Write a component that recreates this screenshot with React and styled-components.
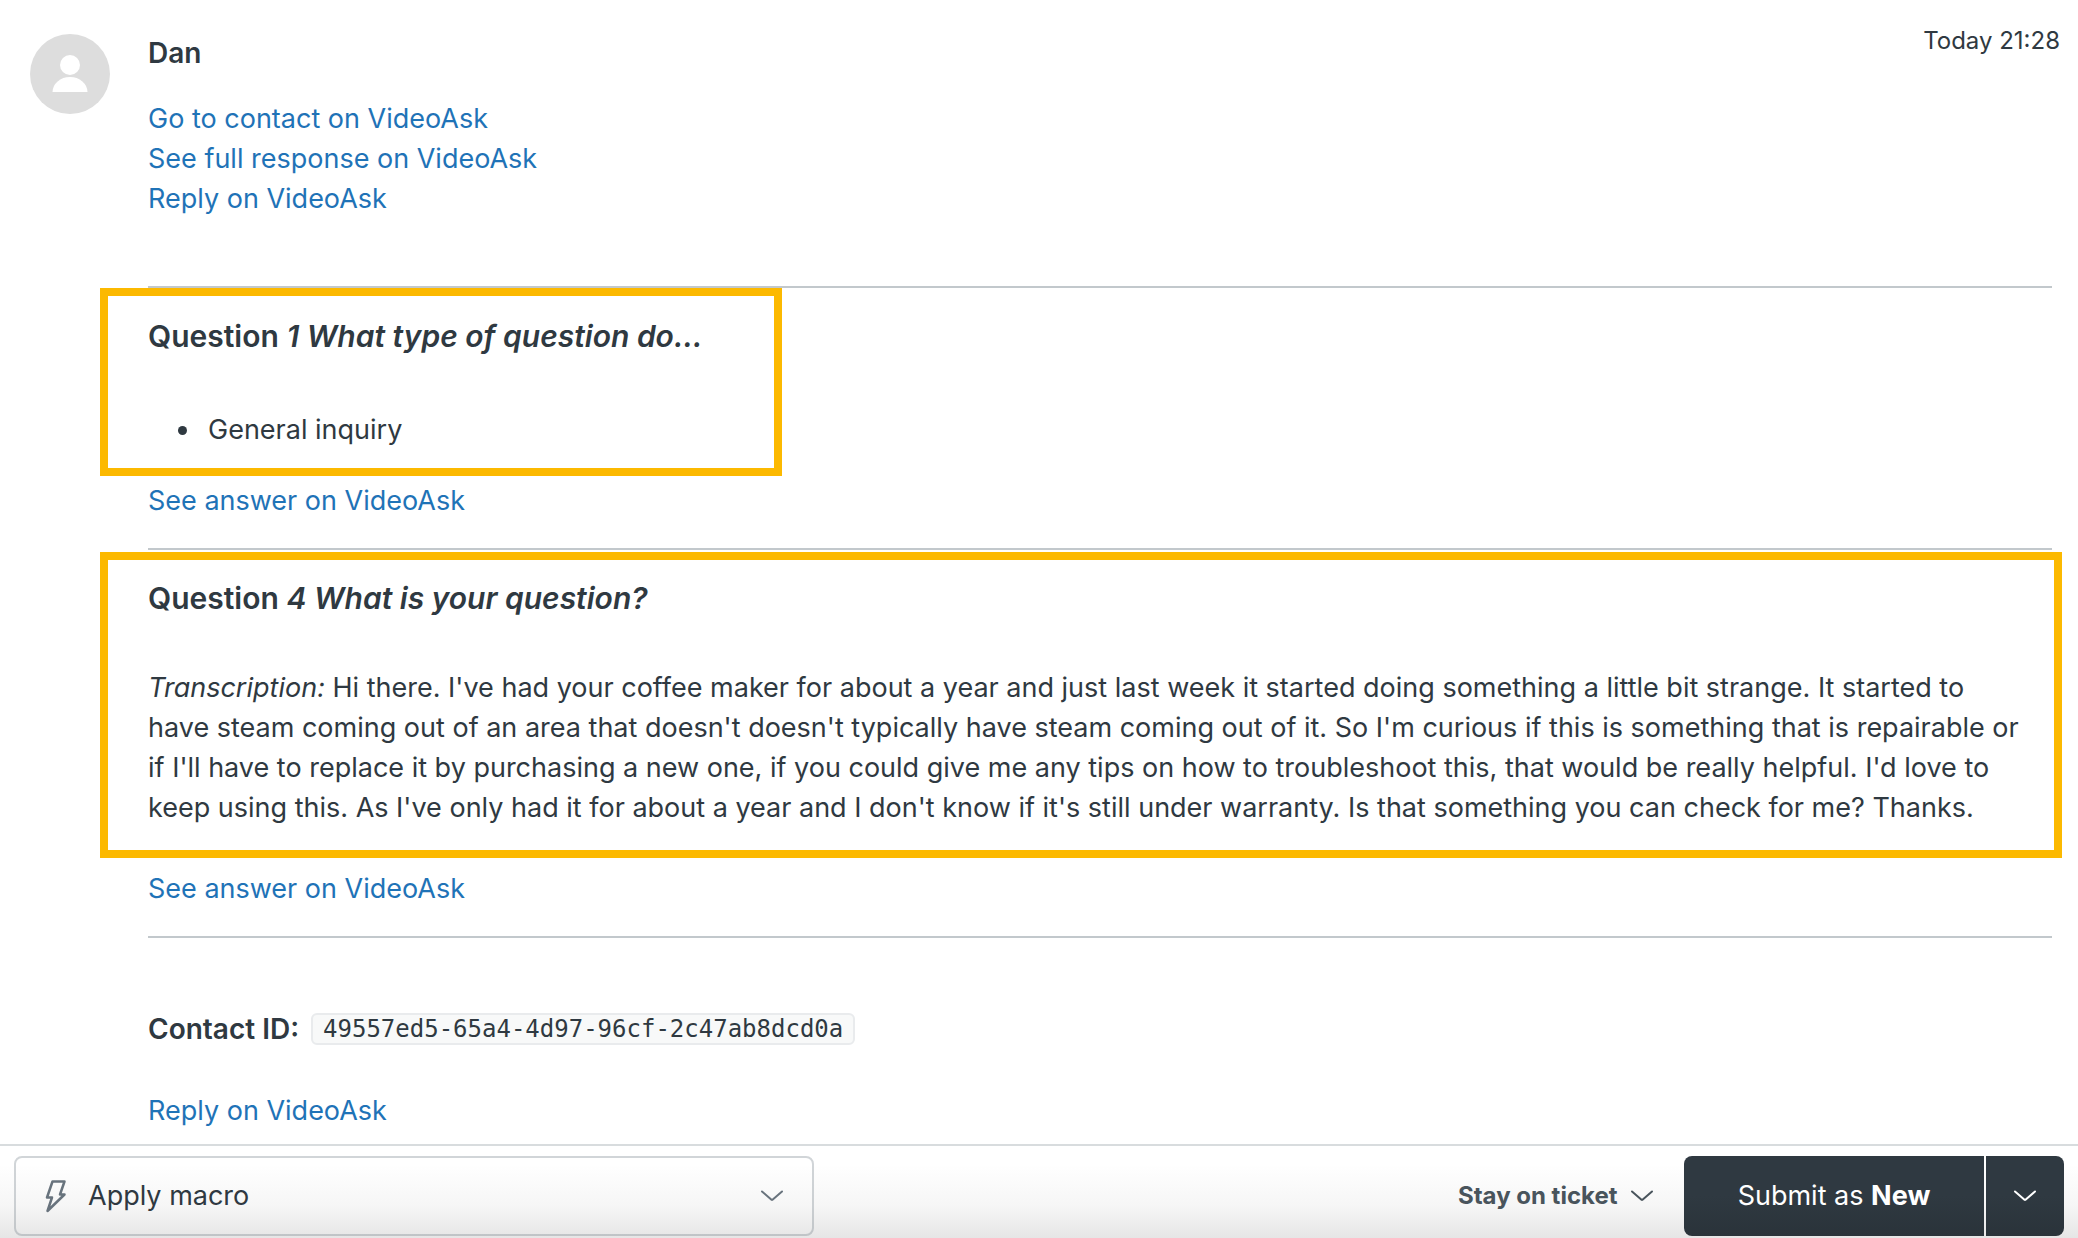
import styled, { createGlobalStyle } from "styled-components";

const GlobalStyle = createGlobalStyle`
  * {
    box-sizing: border-box;
  }
  body {
    margin: 0;
    background: #fff;
    color: #2f3941;
    font-family: Inter, "Liberation Sans", sans-serif;
    font-size: 27px;
    line-height: 40px;
  }
`;

const Page = styled.div`
  display: flex;
  flex-direction: column;
  min-height: 100vh;
`;

const Message = styled.article`
  display: grid;
  grid-template-columns: 80px minmax(0, 1fr);
  column-gap: 38px;
  flex: 1;
  padding: 21px 26px 13px 30px;
`;

const Avatar = styled.svg`
  width: 80px;
  height: 80px;
  margin-top: 13px;
`;

const MessageHeader = styled.header`
  display: flex;
  justify-content: space-between;
  align-items: flex-start;
  margin: 0 -8px 26px 0;
`;

const Author = styled.h2`
  margin: 12px 0 0;
  font-size: 28px;
  font-weight: 600;
`;

const Timestamp = styled.time`
  font-size: 24px;
`;

const Links = styled.nav`
  display: flex;
  flex-direction: column;
  align-items: flex-start;
  margin-bottom: 67px;
`;

const TextLink = styled.a`
  color: #1f73b7;
  text-decoration: none;

  &:hover {
    text-decoration: underline;
  }
`;

const Divider = styled.hr`
  height: 2px;
  margin: 0;
  border: 0;
  background: #c2c8cc;
`;

const Highlight = styled.section`
  width: ${({ $wide }) => ($wide ? "auto" : "682px")};
  margin: ${({ $wide }) => ($wide ? "2px -10px 11px -48px" : "0 0 5px -48px")};
  padding: ${({ $wide }) => ($wide ? "18px 28px 22px 40px" : "20px 28px 18px 40px")};
  border: 8px solid #fcb900;
`;

const QuestionTitle = styled.h3`
  margin: 0 0 ${({ $gap }) => $gap}px;
  font-size: 30px;
  font-weight: 600;
`;

const Choices = styled.ul`
  margin: 0;
  padding-left: 54px;

  li {
    padding-left: 6px;
  }
`;

const Transcription = styled.p`
  margin: 0;
`;

const Answer = styled.div`
  margin-bottom: 27px;
`;

const ContactRow = styled.p`
  display: flex;
  align-items: center;
  gap: 12px;
  margin: 71px 0 42px;
`;

const ContactLabel = styled.strong`
  font-size: 28px;
  font-weight: 600;
`;

const ContactId = styled.code`
  padding: 0 10px;
  border: 2px solid #e9ebed;
  border-radius: 6px;
  background: #f8f9f9;
  font-family: "DejaVu Sans Mono", monospace;
  font-size: 24px;
  line-height: 28px;
`;

const Footer = styled.footer`
  display: flex;
  align-items: center;
  padding: 10px 14px 2px;
  border-top: 2px solid #d8dcde;
  background: linear-gradient(to bottom, #fff 20%, #f6f6f6 65%, #e6e6e6);
`;

const MacroField = styled.label`
  display: flex;
  align-items: center;
  width: 800px;
  height: 80px;
  padding: 0 28px;
  border: 2px solid rgba(104, 115, 125, 0.3);
  border-radius: 8px;
`;

const Select = styled.select`
  appearance: none;
  flex: ${({ $grow }) => ($grow ? 1 : "none")};
  padding: 0;
  border: 0;
  background: transparent;
  color: ${({ $grow }) => ($grow ? "#2f3941" : "#49545c")};
  font: inherit;
  font-size: ${({ $grow }) => ($grow ? 27 : 24)}px;
  font-weight: ${({ $grow }) => ($grow ? 400 : 700)};
  line-height: 40px;
`;

const BoltIcon = styled.svg`
  width: 22px;
  height: 34px;
  margin-right: 22px;
`;

const ChevronIcon = styled.svg`
  display: block;
  flex: none;
  width: 24px;
  height: 14px;
`;

const StayField = styled.label`
  display: flex;
  align-items: center;
  gap: 12px;
  margin: 0 30px 0 auto;
`;

const SubmitGroup = styled.div`
  display: flex;
  gap: 2px;
`;

const SubmitButton = styled.button`
  height: 80px;
  padding: 0;
  width: ${({ $menu }) => ($menu ? 78 : 300)}px;
  border: 0;
  border-radius: ${({ $menu }) => ($menu ? "0 8px 8px 0" : "8px 0 0 8px")};
  background: linear-gradient(to bottom, #2f3941 50%, #2a333a);
  color: #fff;
  font: inherit;

  svg {
    margin: 0 auto;
  }
`;

const Chevron = ({ color = "#49545c" }) => (
  <ChevronIcon viewBox="0 0 24 14" fill="none" aria-hidden="true">
    <path
      d="M2 2.500L11.500 10.800Q12 11.200 12.500 10.800L22 2.500"
      stroke={color}
      strokeWidth="2"
      strokeLinecap="round"
    />
  </ChevronIcon>
);

const App = () => {
  return (
    <Page>
      <GlobalStyle />
      <Message>
        <Avatar viewBox="0 0 80 80" aria-hidden="true">
          <circle cx="40" cy="40" r="40" fill="#ddd" />
          <circle cx="40" cy="31" r="10" fill="#fff" />
          <path d="M22.500 58a17.500 15 0 0 1 35 0z" fill="#fff" />
        </Avatar>
        <div>
          <MessageHeader>
            <Author>Dan</Author>
            <Timestamp>Today 21:28</Timestamp>
          </MessageHeader>
          <Links>
            <TextLink href="#contact">Go to contact on VideoAsk</TextLink>
            <TextLink href="#response">See full response on VideoAsk</TextLink>
            <TextLink href="#reply">Reply on VideoAsk</TextLink>
          </Links>

          <Divider />
          <Highlight>
            <QuestionTitle $gap={54}>
              Question <em>1 What type of question do...</em>
            </QuestionTitle>
            <Choices>
              <li>General inquiry</li>
            </Choices>
          </Highlight>
          <Answer>
            <TextLink href="#answer-1">See answer on VideoAsk</TextLink>
          </Answer>

          <Divider />
          <Highlight $wide>
            <QuestionTitle $gap={50}>
              Question <em>4 What is your question?</em>
            </QuestionTitle>
            <Transcription>
              <em>Transcription:</em> Hi there. I've had your coffee maker for
              about a year and just last week it started doing something a
              little bit strange. It started to have steam coming out of an area
              that doesn't doesn't typically have steam coming out of it. So I'm
              curious if this is something that is repairable or if I'll have to
              replace it by purchasing a new one, if you could give me any tips
              on how to troubleshoot this, that would be really helpful. I'd
              love to keep using this. As I've only had it for about a year and
              I don't know if it's still under warranty. Is that something you
              can check for me? Thanks.
            </Transcription>
          </Highlight>
          <Answer>
            <TextLink href="#answer-4">See answer on VideoAsk</TextLink>
          </Answer>

          <Divider />
          <ContactRow>
            <ContactLabel>Contact ID:</ContactLabel>
            <ContactId>49557ed5-65a4-4d97-96cf-2c47ab8dcd0a</ContactId>
          </ContactRow>
          <TextLink href="#reply">Reply on VideoAsk</TextLink>
        </div>
      </Message>

      <Footer>
        <MacroField>
          <BoltIcon viewBox="0 0 22 34" fill="none" aria-hidden="true">
            <path
              d="M8.500 2.500H20.500L16 15.500H20.500L3.500 32L8 18.500H3Z"
              stroke="#68737d"
              strokeWidth="2.500"
              strokeLinejoin="round"
            />
          </BoltIcon>
          <Select $grow aria-label="Apply macro">
            <option>Apply macro</option>
          </Select>
          <Chevron color="#68737d" />
        </MacroField>
        <StayField>
          <Select aria-label="After submitting">
            <option>Stay on ticket</option>
          </Select>
          <Chevron />
        </StayField>
        <SubmitGroup>
          <SubmitButton type="button">
            Submit as <strong>New</strong>
          </SubmitButton>
          <SubmitButton type="button" $menu aria-label="Choose ticket status">
            <Chevron color="#fff" />
          </SubmitButton>
        </SubmitGroup>
      </Footer>
    </Page>
  );
};

export default App;
